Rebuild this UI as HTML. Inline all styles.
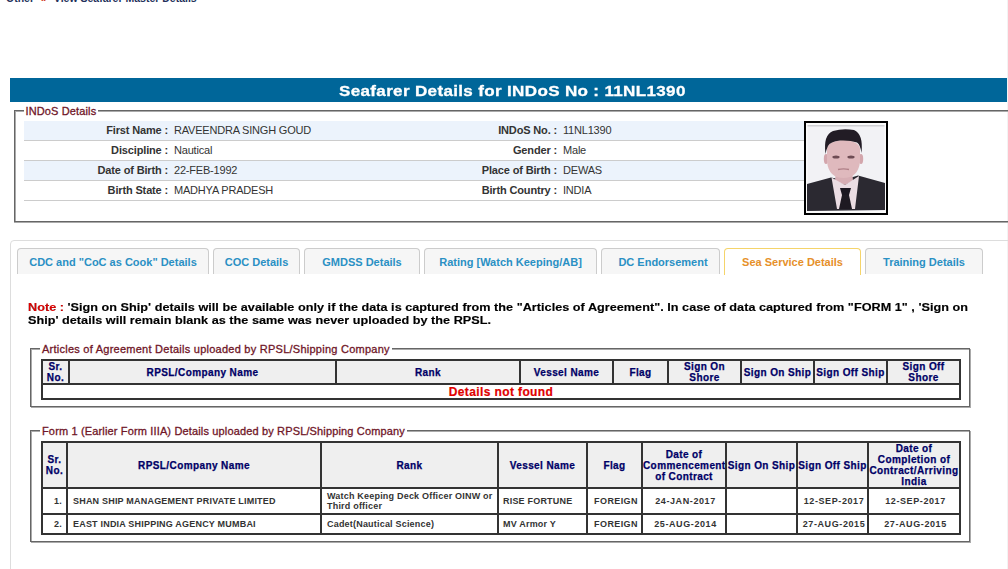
<!DOCTYPE html>
<html><head><meta charset="utf-8">
<style>
*{box-sizing:border-box}
html,body{margin:0;padding:0}
body{width:1008px;height:569px;overflow:hidden;position:relative;background:#fff;font-family:"Liberation Sans",sans-serif;color:#333}
.abs{position:absolute}
#crumb{left:6px;top:-8px;font-weight:bold;font-size:10.5px;color:#22305a;white-space:nowrap;line-height:13px}
#crumb span{color:#d03010;margin:0 7px}
#bar{left:10px;top:78px;width:997px;height:24px;background:#006699}
#bartext{left:339px;top:80px;height:22px;line-height:22px;color:#fff;font-weight:bold;font-size:15.5px;letter-spacing:0.3px;white-space:nowrap;transform:scaleX(1.1);transform-origin:0 0;-webkit-text-stroke:0.3px #fff}
#fs1{left:14px;top:110px;width:1000px;height:112px;border:1px solid #666;border-right:none;box-shadow:inset 1px 1px 0 #aaa,0 1px 0 #aaa}
.legend{position:absolute;background:#fff;color:#701628;-webkit-text-stroke:0.3px #701628;font-size:11px;white-space:nowrap;padding:0 2px;line-height:13px;letter-spacing:0.2px}
.row{position:absolute;left:24px;width:780px;height:20px;border-bottom:1px solid #ccc;font-size:11px;line-height:19px;color:#333}
.row.b{background:#ecf3fc}
.lab{position:absolute;font-weight:bold;text-align:right;white-space:nowrap;letter-spacing:-0.15px}
.val{position:absolute;white-space:nowrap;letter-spacing:-0.2px}
#photo{left:804px;top:121px;width:84px;height:94px;border:2px solid #000;background:#f4f4f4;overflow:hidden}
#tabs{left:10px;top:240px;width:1010px;height:400px;border:1px solid #ddd;border-radius:4px}
.tab{position:absolute;top:248px;height:26px;border:1px solid #ccc;border-bottom:none;border-radius:4px 4px 0 0;background:#f6f6f6;color:#2a90c4;font-weight:bold;font-size:11px;line-height:25px;padding-top:1px;text-align:center;white-space:nowrap}
.tab.act{background:#fff;border-color:#f5d46a;color:#e6902a;height:27px}
#note{left:28px;top:301px;font-weight:bold;font-size:11.5px;line-height:13px;color:#000;white-space:nowrap;letter-spacing:0.02px;transform:scaleX(1.1);transform-origin:0 0;-webkit-text-stroke:0.15px #000}
#note span{color:#e00000}
.fs{position:absolute;left:30px;width:940px;border:1px solid #666;box-shadow:inset 1px 1px 0 #aaa,1px 1px 0 #aaa}
table.g{position:absolute;left:41px;width:920px;border-collapse:separate;border-spacing:0;table-layout:fixed;border-top:2px solid #333;border-left:2px solid #333}
table.g td,table.g th{border-right:2px solid #333;border-bottom:2px solid #333;padding:0;overflow:hidden}
table.g th{background:#efefef;color:#000066;font-size:10px;font-weight:bold;line-height:11px;letter-spacing:0.4px;white-space:nowrap;-webkit-text-stroke:0.25px #000066}
table.g td{font-size:9px;font-weight:bold;color:#333;letter-spacing:0.2px}
</style></head><body>
<div class="abs" style="left:1007px;top:0;width:1px;height:569px;background:#f3f3f3"></div>
<div id="crumb" class="abs">Other<span>»</span>View Seafarer Master Details</div>
<div id="bar" class="abs"></div>
<div id="bartext" class="abs">Seafarer Details for INDoS No : 11NL1390</div>

<div id="fs1" class="abs"></div>
<div class="legend" style="left:23.5px;top:105px;letter-spacing:0.13px">INDoS Details</div>

<div class="row b" style="top:121px"><div class="lab" style="right:636px">First Name :</div><div class="val" style="left:150px">RAVEENDRA SINGH GOUD</div><div class="lab" style="right:247px">INDoS No. :</div><div class="val" style="left:539px">11NL1390</div></div>
<div class="row" style="top:141px"><div class="lab" style="right:636px">Discipline :</div><div class="val" style="left:150px">Nautical</div><div class="lab" style="right:247px">Gender :</div><div class="val" style="left:539px">Male</div></div>
<div class="row b" style="top:161px"><div class="lab" style="right:636px">Date of Birth :</div><div class="val" style="left:150px">22-FEB-1992</div><div class="lab" style="right:247px">Place of Birth :</div><div class="val" style="left:539px">DEWAS</div></div>
<div class="row" style="top:181px"><div class="lab" style="right:636px">Birth State :</div><div class="val" style="left:150px">MADHYA PRADESH</div><div class="lab" style="right:247px">Birth Country :</div><div class="val" style="left:539px">INDIA</div></div>
<div id="photo" class="abs"><svg width="80" height="90" viewBox="0 0 80 90" style="display:block;filter:blur(0.45px)">
<rect width="80" height="90" fill="#fafafa"/>
<rect x="1.5" y="2" width="77" height="86" fill="#f2f2f5"/>
<rect x="1.5" y="2" width="77" height="1.5" fill="#cfcfd3"/>
<path d="M1 61 L25 54.5 Q38 58 52 52.5 L79 60 L79 87 L1 88 Z" fill="#2b2931"/>
<path d="M30 47 L46 47 L47 58 L39 62 L29 58 Z" fill="#d7aeb4"/>
<path d="M25.5 54.5 L39 62 L53 53 L49 86 L31 86 Z" fill="#ebdde3"/>
<path d="M34 65 L45 65 L43 72 L36 72 Z" fill="#1b1720"/>
<path d="M36 72 L43 72 L46 86 L33 86 Z" fill="#1e1a22"/>
<ellipse cx="20" cy="36" rx="2.2" ry="5" fill="#d3a6ac"/>
<ellipse cx="55" cy="36" rx="2.2" ry="5" fill="#d3a6ac"/>
<path d="M21 26 Q21.5 18 37.5 17 Q53.5 18 54 26 L54 39 Q52 55 37.5 55 Q23 55 21 39 Z" fill="#dfb9bd"/>
<path d="M19.5 31 Q17 12 27 8 Q37 5 48 7 Q57.5 11 55.5 30 Q54.5 22 51 19.5 Q44 17 34 17.5 Q24 18.5 22 23 Q20.5 26 19.5 31 Z" fill="#221c25"/>
<ellipse cx="30" cy="34" rx="3.6" ry="1.5" fill="#6e4c54"/>
<ellipse cx="45" cy="34" rx="3.6" ry="1.5" fill="#6e4c54"/>
<path d="M32 46.5 Q37.5 45.3 43 46.5" stroke="#b08088" stroke-width="1.4" fill="none"/>
</svg></div>

<div id="tabs" class="abs"></div>
<div class="tab" style="left:17px;width:192px">CDC and "CoC as Cook" Details</div>
<div class="tab" style="left:213px;width:87px">COC Details</div>
<div class="tab" style="left:304px;width:116px">GMDSS Details</div>
<div class="tab" style="left:424px;width:173px">Rating [Watch Keeping/AB]</div>
<div class="tab" style="left:601px;width:119px;padding-left:5px">DC Endorsement</div>
<div class="tab act" style="left:724px;width:137px">Sea Service Details</div>
<div class="tab" style="left:865px;width:118px">Training Details</div>

<div id="note" class="abs"><span>Note :</span> 'Sign on Ship' details will be available only if the data is captured from the "Articles of Agreement". In case of data captured from "FORM 1" , 'Sign on<br>Ship' details will remain blank as the same was never uploaded by the RPSL.</div>

<div class="fs" style="top:348px;height:59px"></div>
<div class="legend" style="left:40px;top:343px;letter-spacing:0.25px">Articles of Agreement Details uploaded by RPSL/Shipping Company</div>
<table class="g" style="top:359px">
<colgroup><col style="width:27px"><col style="width:267px"><col style="width:184px"><col style="width:93px"><col style="width:55px"><col style="width:73px"><col style="width:73px"><col style="width:73px"><col style="width:73px"></colgroup>
<tr style="height:24px"><th>Sr.<br>No.</th><th>RPSL/Company Name</th><th>Rank</th><th>Vessel Name</th><th>Flag</th><th>Sign On<br>Shore</th><th>Sign On Ship</th><th>Sign Off Ship</th><th>Sign Off<br>Shore</th></tr>
<tr style="height:15px"><td colspan="9" style="text-align:center;color:#e00000;font-size:12px;line-height:11px;padding-top:2px;letter-spacing:0.38px;-webkit-text-stroke:0.2px #e00000">Details not found</td></tr>
</table>

<div class="fs" style="top:430px;height:112px"></div>
<div class="legend" style="left:40px;top:425px;letter-spacing:0.15px">Form 1 (Earlier Form IIIA) Details uploaded by RPSL/Shipping Company</div>
<table class="g" style="top:441px">
<colgroup><col style="width:25px"><col style="width:254px"><col style="width:177px"><col style="width:89px"><col style="width:55px"><col style="width:84px"><col style="width:71px"><col style="width:71px"><col style="width:92px"></colgroup>
<tr style="height:46px"><th>Sr.<br>No.</th><th>RPSL/Company Name</th><th>Rank</th><th>Vessel Name</th><th>Flag</th><th>Date of<br>Commencement<br>of Contract</th><th>Sign On Ship</th><th>Sign Off Ship</th><th>Date of<br>Completion of<br>Contract/Arriving<br>India</th></tr>
<tr style="height:26px"><td style="text-align:right;padding-right:4px">1.</td><td style="padding-left:5px">SHAN SHIP MANAGEMENT PRIVATE LIMITED</td><td style="padding-left:5px;line-height:10px">Watch Keeping Deck Officer OINW or<br>Third officer</td><td style="padding-left:4px">RISE FORTUNE</td><td style="text-align:center;padding-left:3px;letter-spacing:0.4px">FOREIGN</td><td style="text-align:center;padding-left:3px;letter-spacing:0.6px">24-JAN-2017</td><td></td><td style="text-align:center;padding-left:3px;letter-spacing:0.6px">12-SEP-2017</td><td style="text-align:center;padding-left:3px;letter-spacing:0.6px">12-SEP-2017</td></tr>
<tr style="height:20px"><td style="text-align:right;padding-right:4px">2.</td><td style="padding-left:5px">EAST INDIA SHIPPING AGENCY MUMBAI</td><td style="padding-left:5px">Cadet(Nautical Science)</td><td style="padding-left:4px">MV Armor Y</td><td style="text-align:center;padding-left:3px;letter-spacing:0.4px">FOREIGN</td><td style="text-align:center;padding-left:3px;letter-spacing:0.6px">25-AUG-2014</td><td></td><td style="text-align:center;padding-left:3px;letter-spacing:0.6px">27-AUG-2015</td><td style="text-align:center;padding-left:3px;letter-spacing:0.6px">27-AUG-2015</td></tr>
</table>
</body></html>
